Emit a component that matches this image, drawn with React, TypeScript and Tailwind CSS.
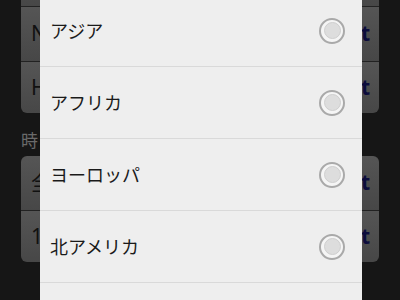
const regions = ["アジア", "アフリカ", "ヨーロッパ", "北アメリカ", "南アメリカ"];

function Radio() {
  return (
    <span className="flex h-[26px] w-[26px] items-center justify-center rounded-full border-2 border-[#a9a9a9] bg-[#f5f5f5]">
      <span className="h-[17px] w-[17px] rounded-full border border-[#cfcfcf] bg-[#dddddd]" />
    </span>
  );
}

function Row({ left, h, top, bottom }: { left: string; h: string; top?: boolean; bottom?: boolean }) {
  return (
    <div
      className={`flex ${h} items-center justify-between border-b border-[#222] bg-gradient-to-b from-[#555555] to-[#474747] pl-[10px] pr-[9px] ${
        top ? "rounded-t-md" : ""
      } ${bottom ? "rounded-b-md border-b-0" : ""}`}
    >
      <span className="text-[21px] text-[#111]">{left}</span>
      <span className="text-[21px] font-bold text-[#0c0c3c]">t</span>
    </div>
  );
}

export default function App() {
  return (
    <div
      className="relative h-[300px] w-[400px] overflow-hidden bg-[#161616]"
      style={{ fontFamily: '"Noto Sans", "Noto Sans CJK JP", sans-serif' }}
    >
      <div className="-mt-[48px] px-[21px]">
        <div className="flex flex-col">
          <Row left="" h="h-[55px]" top />
          <Row left="N" h="h-[55px]" />
          <Row left="H" h="h-[51px]" bottom />
        </div>
        <div className="mt-[12px] h-[31px] text-[17px] leading-[31px] text-[#6a6a6a]">時</div>
        <div className="flex flex-col">
          <Row left="全" h="h-[55px]" top />
          <Row left="1" h="h-[51px]" bottom />
        </div>
      </div>

      <div className="absolute inset-y-0 left-[40px] w-[322px] overflow-hidden bg-[#eeeeee]">
        <div className="-mt-[5px] flex flex-col">
          {regions.map((r) => (
            <div key={r} className="flex h-[72px] items-center justify-between border-b border-[#d9d9d9] pl-[10px] pr-[17px]">
              <span className="text-[18px] text-[#1a1a1a]" style={{ fontFamily: '"Noto Sans CJK JP", sans-serif' }}>
                {r}
              </span>
              <Radio />
            </div>
          ))}
        </div>
      </div>
    </div>
  );
}
